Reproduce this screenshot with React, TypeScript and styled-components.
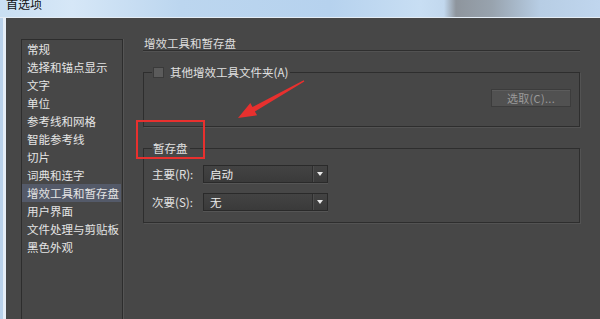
import React from "react";
import styled, { createGlobalStyle } from "styled-components";

const Global = createGlobalStyle`
  html, body { margin: 0; padding: 0; background: #474747; }
  body { font-family: "Noto Sans CJK SC", "Noto Sans", sans-serif; overflow: hidden; }
`;

const Window = styled.div`
  position: relative;
  width: 600px;
  height: 319px;
  display: flex;
  flex-direction: column;
  overflow: hidden;
`;

const TitleBar = styled.div`
  height: 18px;
  flex: none;
  padding-left: 6px;
  background: linear-gradient(90deg, #c9dff3 0%, #d6e7f7 12%, #bcd6ef 30%, #b6d2ee 55%, #c8def3 70%, #c2d8ee 74%, #8e959d 76%, #98a3ae 82%, #b7cde4 90%, #c0d6ee 100%);
  border-bottom: 1px solid #e4edf6;
  box-sizing: border-box;
`;

const TitleText = styled.div`
  font-size: 12px;
  line-height: 10px;
  margin-top: -1px;
  color: #111;
`;

const Body = styled.div`
  flex: 1;
  display: flex;
  background: #474747;
  border-left: 3px solid #b9d1ea;
  box-shadow: inset 3px 0 0 #e6eef7;
  padding-left: 3px;
  min-height: 0;
`;

const SideColumn = styled.div`
  padding: 21px 0 0 15px;
  display: flex;
`;

const SideList = styled.ul`
  width: 100px;
  margin: 0;
  padding: 0;
  list-style: none;
  border: 1px solid #2d2d2d;
  border-bottom: none;
  box-shadow: 1px 0 0 #555;
`;

const SideItem = styled.li<{ $active?: boolean }>`
  height: 18px;
  line-height: 18px;
  padding-left: 5px;
  font-size: 11.5px;
  color: #e4e4e4;
  white-space: nowrap;
  background: ${(p) => (p.$active ? "#545a69" : "transparent")};
  margin-right: ${(p) => (p.$active ? "1px" : "0")};
`;

const Main = styled.div`
  width: 437px;
  margin-left: 20px;
  padding-top: 19px;
`;

const Heading = styled.div`
  font-size: 11.5px;
  line-height: 13px;
  padding-left: 1px;
  color: #dedede;
  border-bottom: 1px solid #2f2f2f;
  box-shadow: 0 1px 0 #525252;
`;

const Group = styled.fieldset<{ $mt: number }>`
  margin: ${(p) => p.$mt}px 0 0 0;
  padding: 0 8px 0 8px;
  border: 1px solid #2e2e2e;
  box-shadow: 1px 1px 0 #535353;
  min-width: 0;
`;

const Legend = styled.legend`
  padding: 0 2px 0 1px;
  font-size: 11.5px;
  line-height: 14px;
  color: #e0e0e0;
  display: flex;
  align-items: center;
  gap: 6px;
`;

const CheckBox = styled.span`
  width: 9px;
  height: 9px;
  background: #5b5b5b;
  border: 1px solid #3a3a3a;
  display: inline-block;
`;

const PluginBody = styled.div`
  display: flex;
  justify-content: flex-end;
  padding: 10px 0 19px;
`;

const Button = styled.div`
  width: 78px;
  height: 16px;
  line-height: 16px;
  text-align: center;
  font-size: 11px;
  color: #9a9a9a;
  background: #515151;
  border: 1px solid #3c3c3c;
  box-shadow: inset 0 1px 0 #5c5c5c;
  letter-spacing: 0.3px;
`;

const ScratchBody = styled.div`
  display: flex;
  flex-direction: column;
  gap: 10px;
  padding: 10px 0 11px;
`;

const Row = styled.div`
  display: flex;
  align-items: center;
  height: 18px;
`;

const Label = styled.span`
  width: 51px;
  font-size: 11.5px;
  color: #e2e2e2;
  white-space: nowrap;
`;

const Select = styled.div`
  width: 123px;
  height: 16px;
  display: flex;
  border: 1px solid #2a2a2a;
  background: linear-gradient(#434343, #3a3a3a);
  box-shadow: 0 1px 0 #555;
`;

const SelectValue = styled.span`
  flex: 1;
  padding-left: 6px;
  font-size: 11.5px;
  line-height: 16px;
  color: #ececec;
`;

const SelectArrow = styled.span`
  width: 14px;
  border-left: 1px solid #2e2e2e;
  box-shadow: inset 1px 0 0 #4d4d4d;
  display: flex;
  align-items: center;
  justify-content: center;
`;

const Triangle = styled.span`
  width: 0;
  height: 0;
  border-left: 3.5px solid transparent;
  border-right: 3.5px solid transparent;
  border-top: 4px solid #e8e8e8;
`;

const Overlay = styled.svg`
  position: absolute;
  left: 0;
  top: 0;
  pointer-events: none;
`;

const items = [
  "常规",
  "选择和锚点显示",
  "文字",
  "单位",
  "参考线和网格",
  "智能参考线",
  "切片",
  "词典和连字",
  "增效工具和暂存盘",
  "用户界面",
  "文件处理与剪贴板",
  "黑色外观",
];

export default function App() {
  return (
    <Window>
      <Global />
      <TitleBar>
        <TitleText>首选项</TitleText>
      </TitleBar>
      <Body>
        <SideColumn>
          <SideList>
            {items.map((t, i) => (
              <SideItem key={t} $active={i === 8}>
                {t}
              </SideItem>
            ))}
          </SideList>
        </SideColumn>
        <Main>
          <Heading>增效工具和暂存盘</Heading>
          <Group $mt={14}>
            <Legend>
              <CheckBox />
              其他增效工具文件夹(A)
            </Legend>
            <PluginBody>
              <Button>选取(C)...</Button>
            </PluginBody>
          </Group>
          <Group $mt={14}>
            <Legend>暂存盘</Legend>
            <ScratchBody>
              <Row>
                <Label>主要(R):</Label>
                <Select>
                  <SelectValue>启动</SelectValue>
                  <SelectArrow>
                    <Triangle />
                  </SelectArrow>
                </Select>
              </Row>
              <Row>
                <Label>次要(S):</Label>
                <Select>
                  <SelectValue>无</SelectValue>
                  <SelectArrow>
                    <Triangle />
                  </SelectArrow>
                </Select>
              </Row>
            </ScratchBody>
          </Group>
        </Main>
      </Body>
      <Overlay width="600" height="319" viewBox="0 0 600 319">
        <rect x="137" y="121" width="67" height="37" fill="none" stroke="#e8302e" strokeWidth="2" />
        <polygon
          points="238,118 250.3,103.1 252.5,107.1 303.7,80.2 304.3,81.4 254.9,111.4 257.1,115.3"
          fill="#e8302e"
        />
      </Overlay>
    </Window>
  );
}
